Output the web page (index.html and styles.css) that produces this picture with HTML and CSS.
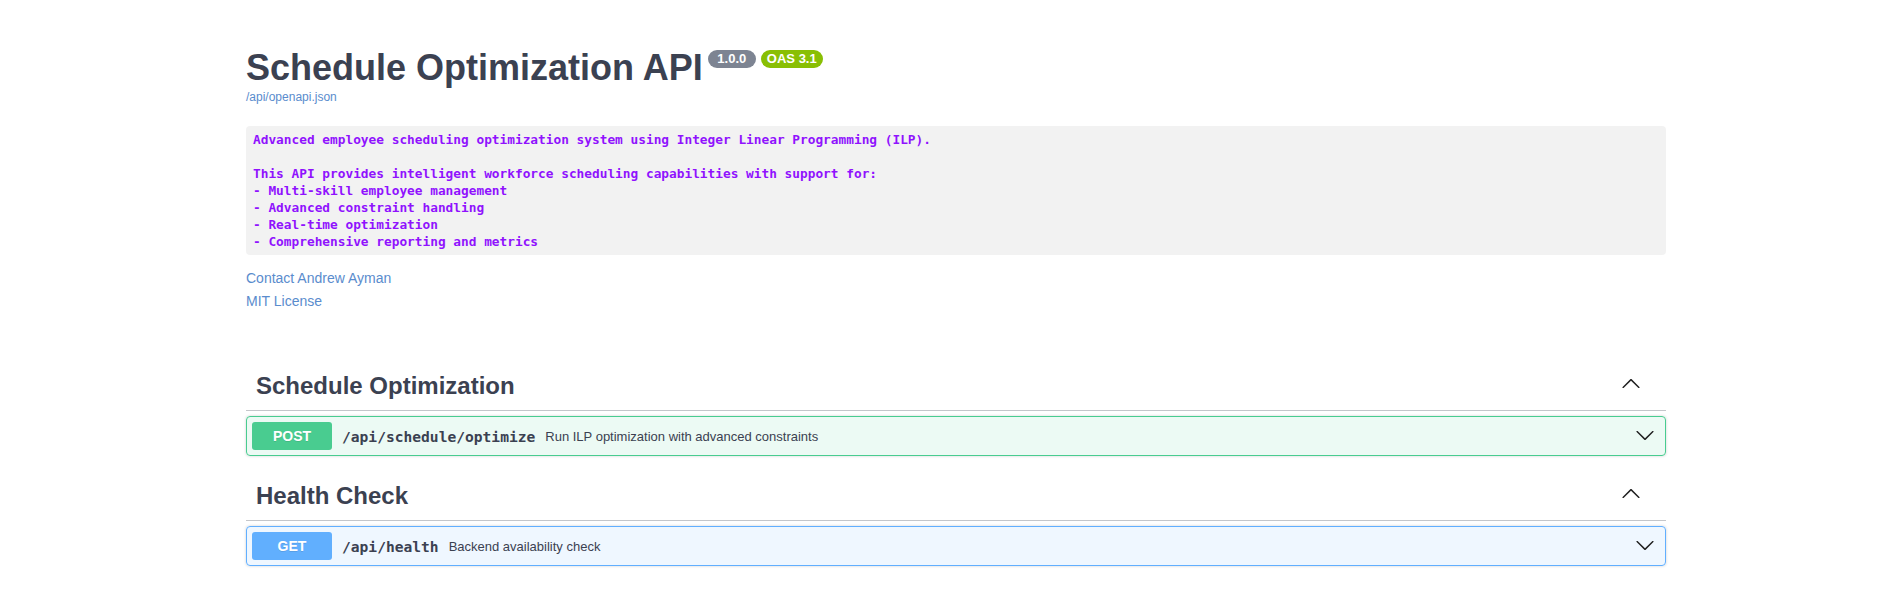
FILE: index.html
```html
<!DOCTYPE html>
<html lang="en">
<head>
<meta charset="utf-8">
<title>Schedule Optimization API</title>
<link rel="stylesheet" href="styles.css">
</head>
<body>
<div class="swagger-ui">
  <div class="wrapper">
    <section class="info">
      <hgroup class="main">
        <h2 class="title">Schedule Optimization API<small class="badge"><pre class="version"> 1.0.0 </pre></small><small class="badge version-stamp"><pre class="version">OAS 3.1</pre></small></h2>
        <a class="spec-url" href="#">/api/openapi.json</a>
      </hgroup>
      <div class="description">
        <pre class="desc-pre"><code>Advanced employee scheduling optimization system using Integer Linear Programming (ILP).

This API provides intelligent workforce scheduling capabilities with support for:
- Multi-skill employee management
- Advanced constraint handling
- Real-time optimization
- Comprehensive reporting and metrics</code></pre>
      </div>
      <div class="info-link"><a href="#">Contact Andrew Ayman</a></div>
      <div class="info-link"><a href="#">MIT License</a></div>
    </section>

    <section class="tag-section">
      <div class="opblock-tag">
        <h3>Schedule Optimization</h3>
        <span class="tag-arrow">
          <svg width="20" height="20" viewBox="0 0 20 20"><path d="M 17.418 14.908 C 17.69 15.176 18.127 15.176 18.397 14.908 C 18.667 14.64 18.668 14.207 18.397 13.939 L 10.489 6.109 C 10.219 5.841 9.782 5.841 9.51 6.109 L 1.602 13.939 C 1.332 14.207 1.332 14.64 1.602 14.908 C 1.873 15.176 2.311 15.176 2.581 14.908 L 10 7.767 L 17.418 14.908 Z"/></svg>
        </span>
      </div>
      <div class="opblock opblock-post">
        <div class="summary">
          <span class="method">POST</span>
          <span class="path">/api/schedule/optimize</span>
          <span class="summary-desc">Run ILP optimization with advanced constraints</span>
          <span class="op-arrow">
            <svg width="20" height="20" viewBox="0 0 20 20"><path transform="rotate(180 10 10)" d="M 17.418 14.908 C 17.69 15.176 18.127 15.176 18.397 14.908 C 18.667 14.64 18.668 14.207 18.397 13.939 L 10.489 6.109 C 10.219 5.841 9.782 5.841 9.51 6.109 L 1.602 13.939 C 1.332 14.207 1.332 14.64 1.602 14.908 C 1.873 15.176 2.311 15.176 2.581 14.908 L 10 7.767 L 17.418 14.908 Z"/></svg>
          </span>
        </div>
      </div>
    </section>

    <section class="tag-section">
      <div class="opblock-tag">
        <h3>Health Check</h3>
        <span class="tag-arrow">
          <svg width="20" height="20" viewBox="0 0 20 20"><path d="M 17.418 14.908 C 17.69 15.176 18.127 15.176 18.397 14.908 C 18.667 14.64 18.668 14.207 18.397 13.939 L 10.489 6.109 C 10.219 5.841 9.782 5.841 9.51 6.109 L 1.602 13.939 C 1.332 14.207 1.332 14.64 1.602 14.908 C 1.873 15.176 2.311 15.176 2.581 14.908 L 10 7.767 L 17.418 14.908 Z"/></svg>
        </span>
      </div>
      <div class="opblock opblock-get">
        <div class="summary">
          <span class="method">GET</span>
          <span class="path">/api/health</span>
          <span class="summary-desc">Backend availability check</span>
          <span class="op-arrow">
            <svg width="20" height="20" viewBox="0 0 20 20"><path transform="rotate(180 10 10)" d="M 17.418 14.908 C 17.69 15.176 18.127 15.176 18.397 14.908 C 18.667 14.64 18.668 14.207 18.397 13.939 L 10.489 6.109 C 10.219 5.841 9.782 5.841 9.51 6.109 L 1.602 13.939 C 1.332 14.207 1.332 14.64 1.602 14.908 C 1.873 15.176 2.311 15.176 2.581 14.908 L 10 7.767 L 17.418 14.908 Z"/></svg>
          </span>
        </div>
      </div>
    </section>
  </div>
</div>
</body>
</html>
```

FILE: styles.css
```css
html, body {
  margin: 0;
  padding: 0;
  background: #ffffff;
}

body {
  font-family: "Liberation Sans", Arial, sans-serif;
  color: #3b4151;
}

.swagger-ui {
  padding-left: 15px;
}

.wrapper {
  max-width: 1420px;
  margin: 0 auto;
}

.info {
  margin: 47px 0 52px;
}

.main {
  margin: 0 0 22px;
}

.title {
  margin: 0;
  font-size: 36px;
  line-height: 41px;
  font-weight: 700;
  color: #3b4151;
}

.badge {
  display: inline-block;
  margin-left: 5px;
  padding: 2px 6px;
  border-radius: 57px;
  background: #7d8492;
  vertical-align: 17px;
  line-height: 14px;
}

.badge.version-stamp {
  background: #89bf04;
}

.version {
  margin: 0;
  padding: 0;
  color: #fff;
  font-family: "Liberation Sans", Arial, sans-serif;
  font-size: 13px;
  font-weight: 700;
  line-height: 14px;
  white-space: pre;
}

.spec-url {
  display: block;
  margin-top: 2px;
  font-size: 12px;
  line-height: 14px;
  color: #5a8ccd;
  text-decoration: none;
}

.description {
  margin: 0;
}

.desc-pre {
  margin: 0 0 15px;
}

.desc-pre code {
  display: block;
  padding: 5px 7px;
  border-radius: 4px;
  background: rgba(0, 0, 0, 0.05);
  color: #9012fe;
  font-family: "DejaVu Sans Mono", "Liberation Mono", monospace;
  font-size: 12.8px;
  font-weight: 700;
  line-height: 17px;
}

.info-link {
  margin-bottom: 7px;
  line-height: 16px;
}

.info-link a {
  font-size: 14px;
  color: #5a8ccd;
  text-decoration: none;
}

.tag-section {
  display: flex;
  flex-direction: column;
}

.opblock-tag {
  display: flex;
  align-items: center;
  padding: 10px 20px 10px 10px;
  margin: 0 0 5px;
  border-bottom: 1px solid rgba(59, 65, 81, 0.3);
}

.opblock-tag h3 {
  flex: 1 1 auto;
  margin: 0;
  font-size: 24px;
  line-height: 29px;
  font-weight: 700;
  color: #3b4151;
}

.tag-arrow {
  display: flex;
  margin-right: 5px;
  margin-bottom: 5px;
}

.tag-arrow svg,
.op-arrow svg {
  fill: #1f1f1f;
}

.opblock {
  margin: 0 0 15px;
  border: 1px solid #000;
  border-radius: 4px;
  box-shadow: 0 0 3px rgba(0, 0, 0, 0.19);
}

.opblock-post {
  background: rgba(73, 204, 144, 0.1);
  border-color: #49cc90;
}

.opblock-get {
  background: rgba(97, 175, 254, 0.1);
  border-color: #61afff;
}

.summary {
  display: flex;
  align-items: center;
  padding: 5px;
}

.method {
  min-width: 80px;
  padding: 6px 0;
  border-radius: 3px;
  color: #fff;
  font-size: 14px;
  line-height: 16px;
  font-weight: 700;
  text-align: center;
  text-shadow: 0 1px 0 rgba(0, 0, 0, 0.1);
}

.opblock-post .method {
  background: #49cc90;
}

.opblock-get .method {
  background: #61affe;
}

.path {
  padding: 0 10px;
  color: #3b4151;
  font-family: "DejaVu Sans Mono", "Liberation Mono", monospace;
  font-size: 14.6px;
  font-weight: 700;
}

.summary-desc {
  flex: 1 1 auto;
  color: #3b4151;
  font-size: 13px;
}

.op-arrow {
  display: flex;
  margin-right: 5px;
}
```
